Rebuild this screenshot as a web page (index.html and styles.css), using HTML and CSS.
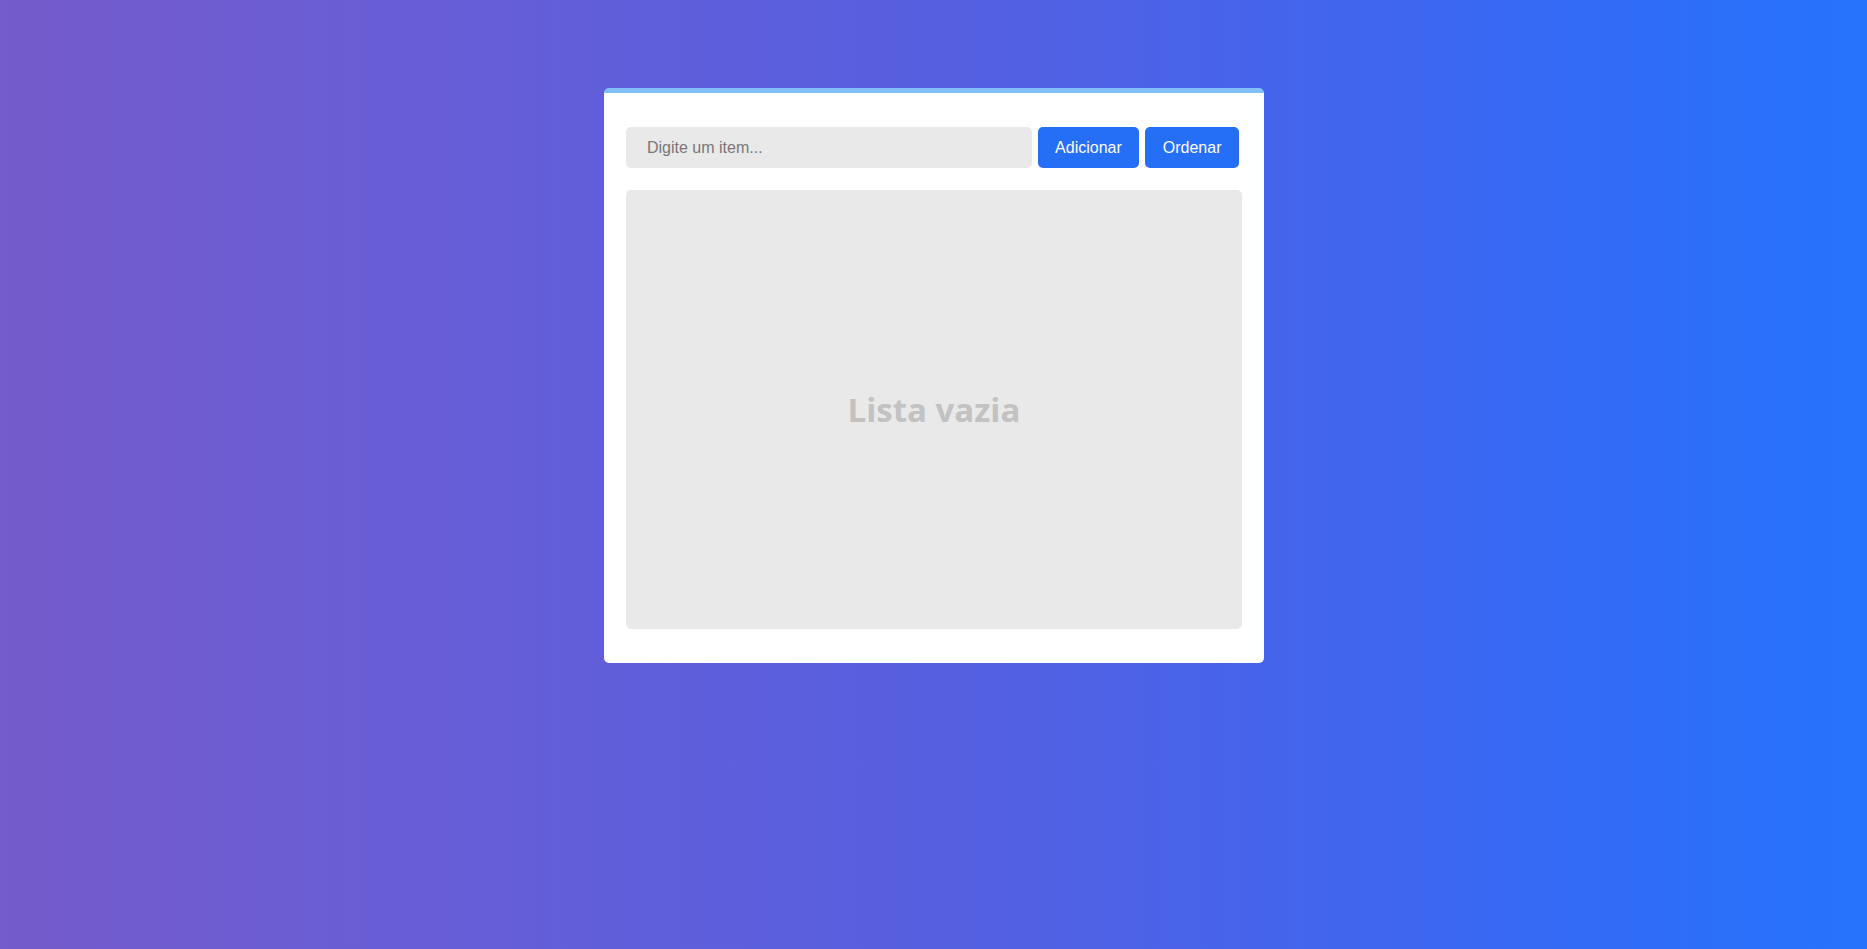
FILE: index.html
```html
<!DOCTYPE html>
<html lang="pt">
<head>
<meta charset="utf-8">
<title>Lista</title>
<link rel="stylesheet" href="styles.css">
</head>
<body>
  <main class="page">
    <section class="card">
      <div class="controls">
        <input class="item-input" type="text" placeholder="Digite um item...">
        <button class="btn">Adicionar</button>
        <button class="btn">Ordenar</button>
      </div>
      <div class="list">
        <p class="empty">Lista vazia</p>
      </div>
    </section>
  </main>
</body>
</html>
```

FILE: styles.css
```css
html, body {
  margin: 0;
  padding: 0;
  height: 100%;
}
body {
  background: linear-gradient(90deg, #755bcb 0%, #6b5dd4 17%, #555fe0 51%, #3d66f0 76%, #2f6cf7 88%, #2673fc 100%);
  font-family: "Liberation Sans", Arial, sans-serif;
}
.page {
  display: flex;
  justify-content: center;
  padding-top: 88px;
  padding-left: 1px;
}
.card {
  width: 660px;
  box-sizing: border-box;
  background: #fff;
  border-top: 5px solid #80c0f6;
  border-radius: 5px;
  padding: 34px 22px 34px;
}
.controls {
  display: flex;
  gap: 6px;
  padding-right: 3px;
}
.item-input {
  flex: 1;
  height: 41px;
  box-sizing: border-box;
  border: none;
  border-radius: 5px;
  background: #e9e9e9;
  padding: 0 21px;
  font-family: "Liberation Sans", Arial, sans-serif;
  font-size: 16px;
  color: #333;
  outline: none;
}
.item-input::placeholder {
  color: #777;
}
.btn {
  height: 41px;
  border: none;
  border-radius: 5px;
  background: #256ef6;
  color: #fff;
  font-family: "Liberation Sans", Arial, sans-serif;
  font-size: 16px;
  padding: 0 17.5px;
  cursor: pointer;
}
.list {
  margin-top: 22px;
  height: 439px;
  background: #e9e9e9;
  border-radius: 5px;
  display: flex;
  align-items: center;
  justify-content: center;
}
.empty {
  margin: 0;
  font-family: "Open Sans", "DejaVu Sans", sans-serif;
  font-weight: 700;
  font-size: 33px;
  color: #c2c2c2;
}
```
